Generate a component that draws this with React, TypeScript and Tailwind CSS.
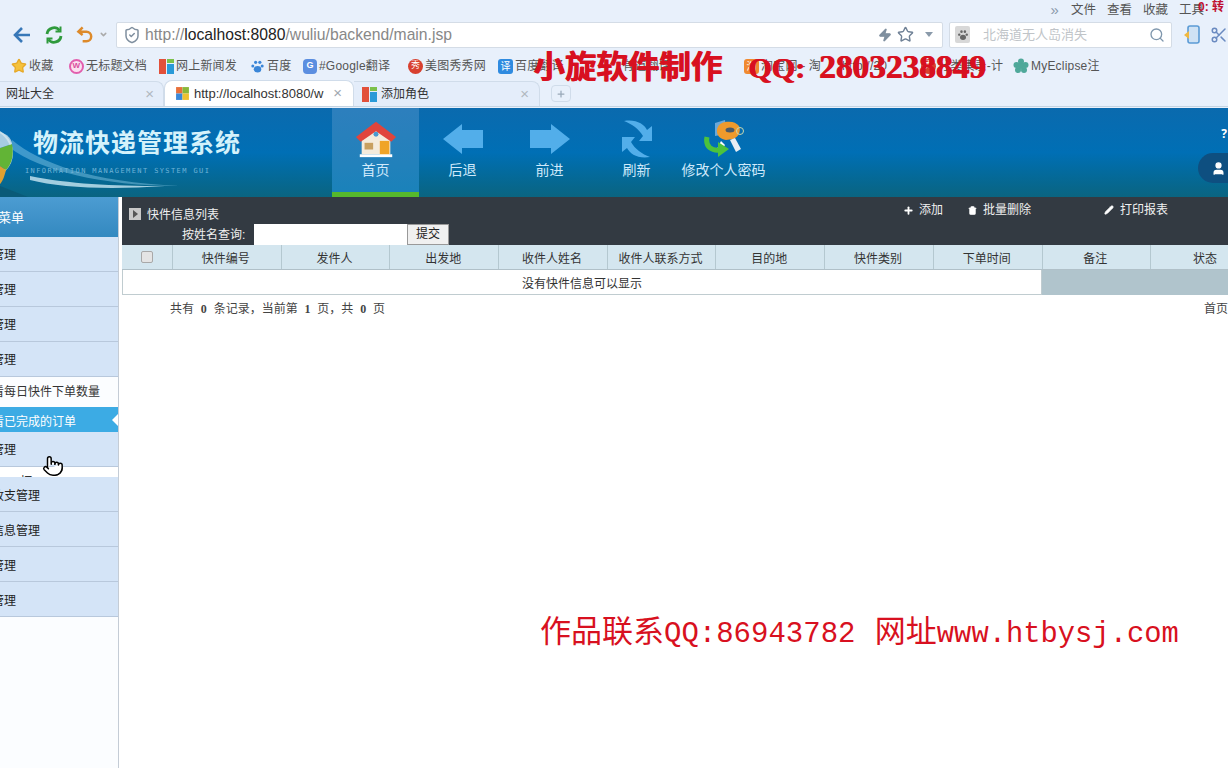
import { Plus, Pencil, Trash, User, Star, Search, Zap, Scissors, Pointer, ShieldCheck, ChevronDown } from 'lucide-react'

const cjk = "font-['Liberation_Sans','Noto_Sans_CJK_SC',sans-serif]"

const bookmarks = [
  { label: '收藏', icon: 'star', w: 'w-[58px]' },
  { label: '无标题文档', icon: 'w', w: 'w-[90px]' },
  { label: '网上新闻发', icon: 'flag', w: 'w-[91px]' },
  { label: '百度', icon: 'paw', w: 'w-[53px]' },
  { label: '#Google翻译', icon: 'g', w: 'w-[105px]' },
  { label: '美图秀秀网', icon: 'xiu', w: 'w-[90px]' },
  { label: '百度翻译', icon: 'yi', w: 'w-[124px]' },
  { label: '有道翻译', icon: '', w: 'w-[122px]' },
  { label: '淘宝网 - 淘', icon: 'tao', w: 'w-[98px]' },
  { label: 'http://20', icon: '', w: 'w-[79px]' },
  { label: '分类集录-计', icon: 'red', w: 'w-[92px]' },
  { label: 'MyEclipse注', icon: 'flower', w: 'w-[100px]' },
]

const columns = ['快件编号', '发件人', '出发地', '收件人姓名', '收件人联系方式', '目的地', '快件类别', '下单时间', '备注']

function FlagIcon() {
  return (
    <span className="flex h-[15px] w-[15px] shrink-0 gap-[1px]">
      <span className="h-full w-[7px] bg-[#e2503a]" />
      <span className="flex w-[7px] flex-col gap-[1px]">
        <span className="h-[4px] bg-[#7cc04a]" />
        <span className="flex-1 bg-[#2a9ad8]" />
      </span>
    </span>
  )
}

function BookmarkIcon({ kind }: { kind: string }) {
  if (kind === 'star') return <Star size={16} className="shrink-0 fill-[#f5c23c] text-[#e6a92a]" />
  if (kind === 'flag') return <FlagIcon />
  if (kind === 'w')
    return (
      <span className="flex h-[15px] w-[15px] shrink-0 items-center justify-center rounded-full border-2 border-[#e25fae] bg-[#fbe0f0] text-[8px] font-bold text-[#d84f9e]">
        W
      </span>
    )
  if (kind === 'paw')
    return (
      <svg viewBox="0 0 16 16" className="shrink-0 h-[15px] w-[15px]" fill="#3a86d8">
        <ellipse cx="8" cy="11" rx="4" ry="3.5" />
        <circle cx="3" cy="7.5" r="1.6" />
        <circle cx="6" cy="3.5" r="1.7" />
        <circle cx="10.5" cy="3.5" r="1.7" />
        <circle cx="13" cy="7.5" r="1.6" />
      </svg>
    )
  if (kind === 'g')
    return (
      <span className="flex h-[15px] w-[14px] shrink-0 items-center justify-center rounded-sm bg-[#5b8ee0] text-[9px] font-bold text-white">
        G
      </span>
    )
  if (kind === 'xiu' || kind === 'red')
    return (
      <span className={`flex h-[15px] w-[15px] shrink-0 items-center justify-center rounded-full bg-[#d8402f] text-[9px] text-white ${cjk}`}>
        秀
      </span>
    )
  if (kind === 'yi')
    return (
      <span className={`flex h-[15px] w-[15px] shrink-0 items-center justify-center rounded-[3px] bg-[#2f8be0] text-[10px] text-white ${cjk}`}>
        译
      </span>
    )
  if (kind === 'tao')
    return (
      <span className={`flex h-[15px] w-[15px] shrink-0 items-center justify-center rounded-[3px] bg-[#f08a30] text-[10px] text-white ${cjk}`}>
        淘
      </span>
    )
  if (kind === 'flower')
    return (
      <svg viewBox="0 0 16 16" className="h-[16px] w-[16px] shrink-0" fill="#4fa89a">
        <circle cx="8" cy="3.5" r="3" />
        <circle cx="3.5" cy="7" r="3" />
        <circle cx="12.5" cy="7" r="3" />
        <circle cx="5" cy="12" r="3" />
        <circle cx="11" cy="12" r="3" />
        <circle cx="8" cy="8" r="3" />
      </svg>
    )
  return null
}

function BrowserChrome() {
  return (
    <div className="flex h-[108px] flex-col bg-[#e8f0fb] text-[#555]">
      {/* menu row */}
      <div className={`flex h-[21px] items-start justify-end text-[12.5px] leading-[21px] ${cjk}`}>
        <span className="mr-[12px] text-[15px] leading-[19px] text-[#8899aa]">»</span>
        <span className="mr-[11px]">文件</span>
        <span className="mr-[11px]">查看</span>
        <span className="mr-[11px]">收藏</span>
        <span className="mr-[24px]">工具</span>
      </div>
      {/* address row */}
      <div className="flex h-[27px] items-center">
        <svg viewBox="0 0 20 20" className="ml-[12px] h-[20px] w-[20px]" fill="none" stroke="#3878b8" strokeWidth="2.6">
          <path d="M18 10H3M10 3l-7 7 7 7" />
        </svg>
        <svg viewBox="0 0 20 20" className="ml-[12px] h-[20px] w-[20px]" fill="none" stroke="#2f9a3c" strokeWidth="2.8">
          <path d="M3 9a7 7 0 0 1 12.5-3.5M17 11a7 7 0 0 1-12.5 3.5" />
          <path d="M16.5 1.5v5h-5M3.5 18.5v-5h5" strokeWidth="2" />
        </svg>
        <svg viewBox="0 0 20 20" className="ml-[12px] h-[20px] w-[19px]" fill="none" stroke="#dd8a2a" strokeWidth="2.6">
          <path d="M7 2L2.5 6.5 7 10M3 6.5h8a4.5 4.5 0 0 1 0 10H7" />
        </svg>
        <ChevronDown size={9} strokeWidth={4} className="ml-[4px] mr-[8px] text-[#aaa]" />
        <div className="flex h-[26px] w-[827px] shrink-0 items-center rounded-[2px] border border-[#d4dce6] bg-white">
          <ShieldCheck size={18} className="ml-[6px] text-[#7f8f9f]" />
          <span className="ml-[4px] font-['Liberation_Sans',sans-serif] text-[15.7px] text-[#888]">
            http://<span className="text-[#222]">localhost:8080</span>/wuliu/backend/main.jsp
          </span>
          <Zap size={14} className="ml-auto fill-[#7f8f9f] text-[#7f8f9f]" />
          <Star size={17} className="ml-[5px] text-[#6f8196]" />
          <span className="ml-[11px] mr-[9px] h-0 w-0 border-x-[4px] border-t-[5px] border-x-transparent border-t-[#8a9aaa]" />
        </div>
        <div className="ml-[6px] flex h-[26px] w-[223px] shrink-0 items-center rounded-[2px] border border-[#d4dce6] bg-white">
          <span className="ml-[5px] flex h-[17px] w-[15px] items-center justify-center rounded-[2px] bg-[#d8d8d8]">
            <svg viewBox="0 0 16 16" className="h-[12px] w-[12px]" fill="#666">
              <ellipse cx="8" cy="11" rx="4" ry="3.5" />
              <circle cx="3" cy="7.5" r="1.6" />
              <circle cx="6" cy="3.5" r="1.7" />
              <circle cx="10.5" cy="3.5" r="1.7" />
              <circle cx="13" cy="7.5" r="1.6" />
            </svg>
          </span>
          <span className={`ml-[13px] text-[13px] text-[#c0c4c8] ${cjk}`}>北海道无人岛消失</span>
          <Search size={16} className="ml-auto mr-[6px] text-[#7f97ad]" />
        </div>
        <svg viewBox="0 0 18 20" className="ml-[11px] h-[20px] w-[18px] shrink-0">
          <rect x="5" y="1" width="11" height="17" rx="2" fill="#cfe2f4" stroke="#5b9bd5" strokeWidth="1.6" />
          <path d="M1 10l5-4v8z" fill="#f0b840" />
        </svg>
        <Scissors size={18} className="ml-[9px] shrink-0 text-[#6a8ac0]" />
      </div>
      {/* bookmarks */}
      <div className={`mt-[7px] flex h-[22px] items-center pl-[11px] text-[12px] text-[#555] ${cjk}`}>
        {bookmarks.map((b) => (
          <span key={b.label} className={`flex shrink-0 items-center gap-[2px] whitespace-nowrap tracking-[0.2px] ${b.w}`}>
            <BookmarkIcon kind={b.icon} />
            {b.label}
          </span>
        ))}
      </div>
      {/* tabs */}
      <div className={`mt-[4px] flex h-[26px] items-end border-b border-[#c4d4e2] text-[12px] text-[#333] ${cjk}`}>
        <div className="flex h-[25px] w-[164px] items-center rounded-tr-lg border-r border-t border-[#d0dcea] bg-[#e4edfa] pl-[6px]">
          网址大全
          <span className="ml-auto mr-[9px] text-[15px] text-[#b0b8c0]">×</span>
        </div>
        <div className="z-10 flex h-[26px] w-[190px] items-center rounded-t-lg border-x border-t border-[#d0dcea] bg-white pl-[10px]">
          <svg viewBox="0 0 14 14" className="mr-[4px] h-[15px] w-[15px] shrink-0">
            <rect x="1" y="1" width="6" height="6" fill="#e8703a" />
            <rect x="7" y="1" width="6" height="6" fill="#8ab83a" />
            <rect x="1" y="7" width="6" height="6" fill="#3a88d8" />
            <rect x="7" y="7" width="6" height="6" fill="#f0c030" />
          </svg>
          <span className="w-[131px] overflow-hidden whitespace-nowrap font-['Liberation_Sans',sans-serif] text-[13px]">http://localhost:8080/w</span>
          <span className="ml-auto mr-[11px] text-[15px] text-[#a0a8b0]">×</span>
        </div>
        <div className="flex h-[25px] w-[186px] items-center rounded-tr-lg border-r border-t border-[#d0dcea] bg-[#e4edfa] pl-[8px]">
          <FlagIcon />
          <span className="ml-[4px]">添加角色</span>
          <span className="ml-auto mr-[10px] text-[15px] text-[#b0b8c0]">×</span>
        </div>
        <span className="mb-[4px] ml-[11px] flex h-[17px] w-[20px] items-center justify-center rounded-sm border border-[#d0dcea] text-[#99a8b8]">
          <Plus size={10} strokeWidth={3} />
        </span>
      </div>
    </div>
  )
}

function NavItem({ label, active, children }: { label: string; active?: boolean; children: React.ReactNode }) {
  return (
    <div
      className={
        active
          ? 'flex h-[89px] w-[87px] shrink-0 flex-col items-center border-b-[5px] border-[#56b82c] bg-gradient-to-b from-[#2d7fbd] to-[#1a82ba] pt-[8px]'
          : 'flex h-[89px] w-[87px] shrink-0 flex-col items-center pt-[8px]'
      }
    >
      <div className="flex h-[46px] items-center justify-center">{children}</div>
      <span className={`-mx-[10px] whitespace-nowrap text-[14px] leading-[16px] text-[#cfe9fb] ${cjk}`}>{label}</span>
    </div>
  )
}

function Header() {
  return (
    <div className="relative flex h-[89px] bg-gradient-to-b from-[#0a6aae] via-[#006fb5] via-50% to-[#0a6480]">
      {/* logo and swoosh */}
      <svg viewBox="0 0 330 89" className="absolute left-0 top-0 h-[89px] w-[330px]" fill="none">
        <path d="M12 32 C40 55 90 74 180 78 C100 78 40 62 10 40z" fill="#8ccbe8" opacity="0.45" />
        <path d="M30 68 C70 76 110 78 165 78 C110 82 60 80 30 72z" fill="#d8f0fa" opacity="0.75" />
        <path d="M0 78 L28 89 L0 89z" fill="#0a5a78" />
        <circle cx="-12" cy="45" r="24" stroke="#b8d8e4" strokeWidth="2" />
        <path d="M0 40 L12 36 C14 46 12 56 6 62 L0 58z" fill="#62b436" />
        <path d="M0 58 L6 62 C4 70 2 74 0 76z" fill="#e0a030" />
        <path d="M0 24 C8 26 12 32 12 36 L0 40z" fill="#d0e4ee" opacity="0.8" />
      </svg>
      <div className="relative w-[332px] shrink-0 pl-[33px] pt-[18px]">
        <div className={`text-[25px] font-bold leading-[34px] tracking-[1px] text-[#d4f2fb] ${cjk}`}>物流快递管理系统</div>
        <div className="-ml-[8px] mt-[6px] whitespace-nowrap font-['DejaVu_Sans_Mono',monospace] text-[7px] leading-[10px] tracking-[1.4px] text-[#6fb4d8]">
          INFORMATION MANAGEMENT SYSTEM GUI
        </div>
      </div>
      <NavItem label="首页" active>
        <svg viewBox="0 0 44 38" className="h-[38px] w-[42px]">
          <path d="M7 14L22 6l15 8v21H7z" fill="#f4ebdc" />
          <path d="M1 17L22 1l21 16-5 5L22 11 6 22z" fill="#e0453c" />
          <circle cx="22" cy="14" r="2.6" fill="#4a9ad0" />
          <rect x="10" y="23" width="9" height="7" fill="#c8a060" />
          <rect x="26" y="21" width="10" height="15" fill="#f0a428" />
          <rect x="5" y="35" width="34" height="3" fill="#ffffff" />
        </svg>
      </NavItem>
      <NavItem label="后退">
        <svg viewBox="0 0 40 30" className="h-[30px] w-[40px]">
          <path d="M0 15L19 0v6h21v18H19v6z" fill="#52aeea" />
        </svg>
      </NavItem>
      <NavItem label="前进">
        <svg viewBox="0 0 40 30" className="h-[30px] w-[40px]">
          <path d="M40 15L21 0v6H0v18h21v6z" fill="#52aeea" />
        </svg>
      </NavItem>
      <NavItem label="刷新">
        <svg viewBox="0 0 34 40" className="h-[40px] w-[34px]">
          <path d="M4 2C16 0 24 5 27 11l5-4v15H19l4-5C19 10 12 5 4 2z" fill="#52aeea" />
          <path d="M30 38C18 40 10 35 7 29l-5 4V18h13l-4 5c4 7 11 12 19 15z" fill="#52aeea" />
        </svg>
      </NavItem>
      <NavItem label="修改个人密码">
        <svg viewBox="0 0 42 38" className="h-[38px] w-[42px]">
          <path d="M12 3l10-3 2 14-12 2z" fill="#6aa8d8" />
          <path d="M14 9a12 9 0 0 1 22-3c2 5 0 11-6 13l-7 1c-6-1-10-5-9-11z" fill="#ee9a2c" />
          <ellipse cx="27" cy="10" rx="4.5" ry="2.5" fill="#4a5a68" />
          <circle cx="37" cy="11" r="3.5" fill="none" stroke="#c8d8b0" strokeWidth="1" />
          <path d="M27 20l5-2 6 11-5 3z" fill="#e8eef4" />
          <path d="M18 21l4 4-5 7-3-3z" fill="#fff" />
          <path d="M4 17C2 27 9 31 17 30" fill="none" stroke="#4cc23c" strokeWidth="5" />
          <path d="M15 22l11 7-11 8z" fill="#4cc23c" />
        </svg>
      </NavItem>
      <div className="ml-auto flex flex-col items-end pt-[19px]">
        <span className="mr-[1px] text-[12px] font-bold leading-[14px] text-white">?</span>
        <span className="mt-[12px] flex h-[30px] w-[30px] items-center justify-start rounded-l-full bg-[#0e4f80] pl-[13px]">
          <User size={15} className="fill-white text-white" />
        </span>
      </div>
    </div>
  )
}

function MenuRow({ label, low }: { label: string; low?: boolean }) {
  return (
    <div
      className={
        low
          ? 'flex h-[35px] items-center whitespace-nowrap border-b border-[#b8c8dc] bg-[#d4e4f7] pt-[3px] text-[12px] text-[#222]'
          : 'flex h-[35px] items-center whitespace-nowrap border-b border-[#b8c8dc] bg-[#d4e4f7] pt-[2px] text-[12px] text-[#222]'
      }
    >
      <span className="-ml-[8px]">{label}</span>
    </div>
  )
}

function Sidebar() {
  return (
    <div className={`flex w-[119px] shrink-0 flex-col overflow-hidden border-r border-[#c4ccd6] bg-[#fbfdff] ${cjk}`}>
      <div className="flex h-[40px] items-center whitespace-nowrap bg-gradient-to-b from-[#4c9cd2] to-[#3389c0] pt-[2px] text-[13px] text-white">
        <span className="-ml-[15px]">主菜单</span>
      </div>
      <MenuRow label="管理" />
      <MenuRow label="管理" />
      <MenuRow label="管理" />
      <MenuRow label="管理" />
      <div className="flex h-[30px] items-center whitespace-nowrap bg-[#fbfdff] text-[12px] text-[#333]">
        <span className="-ml-[20px]">查看每日快件下单数量</span>
      </div>
      <div className="flex h-[25px] items-center whitespace-nowrap bg-[#3cabe4] pt-[4px] text-[12px] text-white">
        <span className="-ml-[20px]">查看已完成的订单</span>
        <span className="ml-auto -mt-[3px] h-0 w-0 border-y-[6px] border-r-[6px] border-y-transparent border-r-white" />
      </div>
      <MenuRow label="管理" />
      <div className="h-[10px] overflow-hidden whitespace-nowrap bg-white pt-[7px] text-[12px] leading-[16px] text-[#333]">
        <span className="ml-[8px] block">一打</span>
      </div>
      <MenuRow label="收支管理" low />
      <MenuRow label="信息管理" low />
      <MenuRow label="管理" low />
      <MenuRow label="管理" low />
    </div>
  )
}

function Toolbar() {
  return (
    <div className={`flex h-[48px] bg-[#333a42] text-[12px] text-[#f0f0f0] ${cjk}`}>
      <div className="w-[780px] shrink-0">
        <div className="flex h-[26px] items-end pl-[7px]">
          <span className="mb-[3px] mr-[6px] flex h-[12px] w-[12px] items-center justify-center bg-[#c8c8c8]">
            <span className="h-0 w-0 border-y-[4px] border-l-[5px] border-y-transparent border-l-[#555]" />
          </span>
          <span className="leading-[16px]">快件信息列表</span>
        </div>
        <div className="flex h-[22px] items-center pl-[60px]">
          <span className="w-[72px] pt-[2px]">按姓名查询:</span>
          <span className="h-[21px] w-[153px] bg-white" />
          <span className="flex h-[21px] w-[42px] items-center justify-center border border-[#999] bg-[#f0f0f0] text-[#222]">提交</span>
        </div>
      </div>
      <div className="flex h-[26px] items-center">
        <Plus size={11} strokeWidth={4} className="ml-[1px] text-white" />
        <span className="ml-[5px]">添加</span>
        <Trash size={9} strokeWidth={3} className="ml-[25px] fill-white text-white" />
        <span className="ml-[6px]">批量删除</span>
        <Pencil size={10} className="ml-[73px] fill-white text-white" />
        <span className="ml-[6px]">打印报表</span>
      </div>
    </div>
  )
}

function Grid() {
  return (
    <div className={`w-[1106px] text-[12px] text-[#333] ${cjk}`}>
      <div className="flex h-[25px] border-b border-[#b0c0c8] bg-[#d4e6ef]">
        <div className="flex w-[51px] shrink-0 items-center justify-center border-r border-[#b4c8d0]">
          <span className="h-[12px] w-[12px] rounded-[2px] border border-[#a8a8a8] bg-[#e4e4e4]" />
        </div>
        {columns.map((c) => (
          <div key={c} className="flex w-[108.7px] shrink-0 items-center justify-center border-r border-[#b4c8d0] pr-[2px] pt-[3px]">
            {c}
          </div>
        ))}
        <div className="flex flex-1 items-center justify-end pr-[11px] pt-[3px]">状态</div>
      </div>
      <div className="flex h-[25px]">
        <div className="flex w-[920px] shrink-0 items-center justify-center border-x border-b border-[#c0ccd0] bg-white pt-[3px]">
          没有快件信息可以显示
        </div>
        <div className="flex-1 bg-[#b0c4cc]" />
      </div>
      <div className="flex h-[26px] items-center justify-between pl-[48px] pt-[2px] text-[#444]">
        <span className="whitespace-pre">
          共有 <b className="mx-[0.5px] font-['Liberation_Serif',serif]"> 0 </b> 条记录，当前第 <b className="mx-[0.5px] font-['Liberation_Serif',serif]"> 1 </b> 页，共 <b className="mx-[0.5px] font-['Liberation_Serif',serif]"> 0 </b> 页
        </span>
        <span>首页</span>
      </div>
    </div>
  )
}

export default function App() {
  return (
    <div className="relative h-[768px] w-[1228px] overflow-hidden bg-white">
      <BrowserChrome />
      <Header />
      <div className="flex h-[571px]">
        <Sidebar />
        <div className="ml-[3px] min-w-0 flex-1 overflow-hidden">
          <Toolbar />
          <Grid />
        </div>
      </div>

      {/* recording watermarks and cursor on top of the capture */}
      <div className="absolute left-[533px] top-[47px] flex items-baseline whitespace-pre font-['Liberation_Serif','Noto_Sans_CJK_SC',serif] font-bold leading-[40px] text-[#d81020] [text-shadow:1px_0_#d81020]">
        <span className="text-[31.5px]">小旋软件制作</span>
        <span className="ml-[26px] text-[30px]">QQ:</span>
        <span className="ml-[14px] text-[33.4px]">2803238849</span>
      </div>
      <div className={`absolute left-[1198px] top-0 whitespace-pre text-[12px] font-bold leading-[14px] text-[#c01030] ${cjk}`}>0: 转</div>
      <div className="absolute left-[540px] top-[612px] flex items-baseline whitespace-pre text-[#d81020]">
        <span className={`text-[31px] leading-[40px] ${cjk}`}>作品联系</span>
        <span className="font-['Liberation_Mono',monospace] text-[29px] leading-[40px]">QQ:86943782 </span>
        <span className={`ml-[2px] text-[31px] leading-[40px] ${cjk}`}>网址</span>
        <span className="font-['Liberation_Mono',monospace] text-[28.8px] leading-[40px]">www.htbysj.com</span>
      </div>
      <Pointer size={22} className="absolute left-[42px] top-[455px] fill-white text-black" strokeWidth={1.6} />
    </div>
  )
}
